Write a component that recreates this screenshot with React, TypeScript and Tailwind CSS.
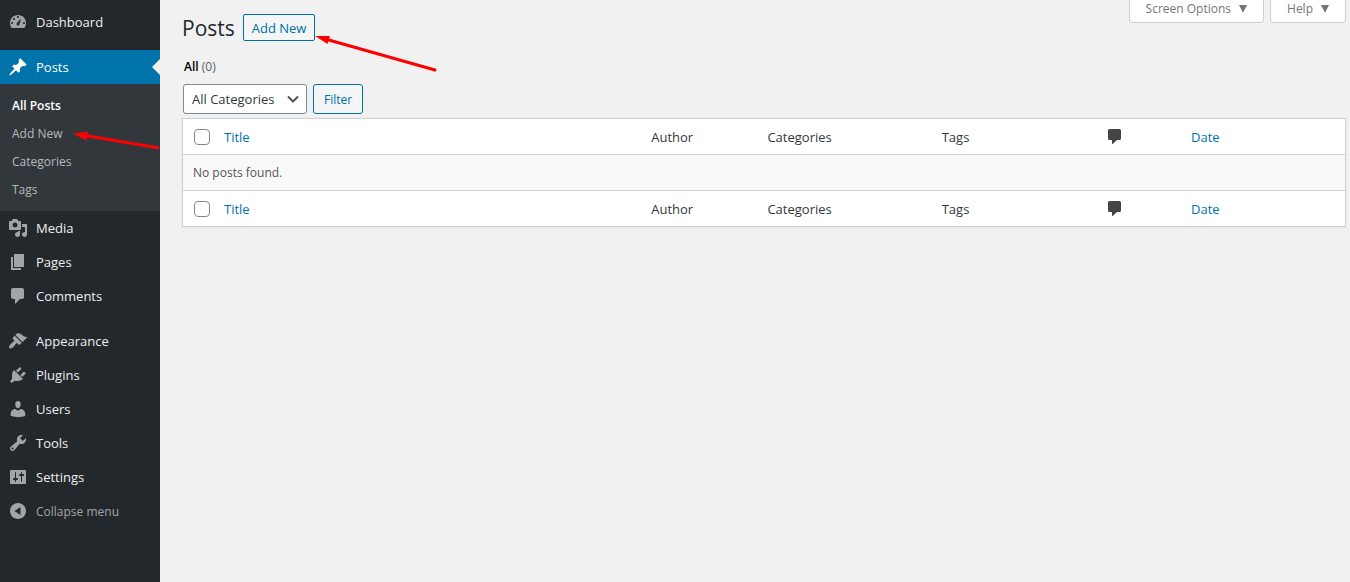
import React from 'react';

const icons = {
  dashboard:
    'M3.76 16h12.48c1.1-1.37 1.76-3.11 1.76-5 0-4.42-3.58-8-8-8s-8 3.58-8 8c0 1.89.66 3.63 1.76 5zM9 5c0-.55.45-1 1-1s1 .45 1 1c0 .56-.45 1-1 1s-1-.44-1-1zM5 7c0-.55.45-1 1-1s1 .45 1 1-.45 1-1 1-1-.45-1-1zM8.520 11.400c.84-.83 4.500-5 4.500-5s-.650 4.180-1.480 5.010c-.84.84-2.180.84-3.020 0zM3 11c0-.55.45-1 1-1s1 .45 1 1c0 .56-.45 1-1 1s-1-.44-1-1zM15 11c0-.55.45-1 1-1s1 .45 1 1c0 .56-.45 1-1 1s-1-.44-1-1zM8.500 12a1.500 1.500 0 1 0 3 0z',
  posts:
    'M10.44 3.02l1.820-1.820 6.360 6.350-1.830 1.820c-1.050-.68-2.480-.57-3.410.36l-.75.75c-.92.93-1.040 2.350-.35 3.410l-1.830 1.820-2.410-2.410-2.800 2.790c-.42.42-3.380 2.710-3.800 2.290s1.860-3.390 2.280-3.810l2.790-2.790L4.100 9.360l1.830-1.820c1.050.69 2.480.57 3.400-.36l.75-.75c.93-.92 1.050-2.350.36-3.410z',
  media:
    'M13 11V4c0-.55-.45-1-1-1h-1.670L9 1H5L3.670 3H2c-.55 0-1 .45-1 1v7c0 .55.45 1 1 1h10c.55 0 1-.45 1-1zM7 4.500c1.380 0 2.500 1.120 2.500 2.500S8.380 9.500 7 9.500 4.500 8.380 4.500 7 5.620 4.500 7 4.500zM14 6h5v10.500c0 1.380-1.120 2.500-2.500 2.500S14 17.880 14 16.500s1.120-2.500 2.500-2.500c.17 0 .34.02.5.05V9h-3V6zM10 14.050V13h2v3.500c0 1.380-1.120 2.500-2.500 2.500S7 17.880 7 16.500 8.120 14 9.500 14c.17 0 .34.02.5.05z',
  pages: 'M6 15V2h10v13H6zM5 16h8v2H3V5h2v11z',
  comments:
    'M5 2h9c1.100 0 2 .9 2 2v7c0 1.100-.9 2-2 2h-2l-5 5v-5H5c-1.100 0-2-.9-2-2V4c0-1.100.9-2 2-2z',
  appearance:
    'M14.480 11.060L7.410 3.990l1.500-1.500c.5-.56 2.300-.47 3.510.32 1.210.8 1.430 1.280 2.910 2.100 1.180.64 2.450 1.260 4.450.85zM13.770 11.770L6.700 4.700 4.930 6.470c-.39.39-.39 1.020 0 1.410l1.060 1.060c.39.39.39 1.030 0 1.420-.6.6-1.430 1.110-2.210 1.690-.35.26-.7.53-1.010.84C1.430 14.230.4 16.080 1.400 17.070c.99 1 2.840-.03 4.180-1.360.31-.31.58-.66.85-1.020.57-.78 1.080-1.610 1.690-2.210.39-.39 1.020-.39 1.410 0l1.060 1.060c.39.39 1.020.39 1.410 0z',
  plugins:
    'M13.110 4.360L9.870 7.600 8 5.730l3.240-3.240c.35-.34 1.050-.2 1.560.32.52.51.66 1.210.31 1.550zM5.110 6.130l.91-1.120 9.010 9.010-1.190.84c-.71.71-2.630 1.160-3.820 1.160H6.140L4.900 17.260c-.59.59-1.540.59-2.120 0-.59-.58-.59-1.530 0-2.120l1.240-1.240v-3.880c0-1.130.4-3.190 1.090-3.890zM12.370 10.100l3.240-3.240c.34-.35 1.040-.21 1.550.31.52.51.66 1.210.31 1.550l-3.240 3.250z',
  users:
    'M10 9.250c-2.270 0-2.730-3.440-2.730-3.440C7 4.020 7.820 2 9.970 2c2.160 0 2.980 2.020 2.710 3.810 0 0-.41 3.440-2.680 3.440zM10 11.820L12.720 10c2.390 0 4.520 2.330 4.520 4.530v2.490s-3.650 1.130-7.240 1.130c-3.650 0-7.240-1.130-7.240-1.130v-2.490c0-2.250 1.940-4.480 4.470-4.480z',
  tools:
    'M16.680 9.770c-1.340 1.340-3.300 1.670-4.950.99l-5.410 6.520c-.99.99-2.590.99-3.580 0s-.99-2.590 0-3.570l6.520-5.420c-.68-1.650-.35-3.610.99-4.950 1.280-1.280 3.120-1.620 4.720-1.060l-2.890 2.890 2.820 2.820 2.860-2.870c.53 1.580.18 3.390-1.080 4.650zM3.810 16.210c.4.39 1.040.39 1.430 0 .4-.4.4-1.040 0-1.430-.39-.4-1.030-.4-1.430 0-.39.39-.39 1.030 0 1.430z',
  settings:
    'M18 16V4c0-.55-.45-1-1-1H3c-.55 0-1 .45-1 1v12c0 .55.45 1 1 1h14c.55 0 1-.45 1-1zM8 11h1c.55 0 1 .45 1 1s-.45 1-1 1H8v1.500c0 .28-.22.5-.5.5s-.5-.22-.5-.5V13H6c-.55 0-1-.45-1-1s.45-1 1-1h1V5.500c0-.28.22-.5.5-.5s.5.22.5.5V11zM13 9h-1c-.55 0-1-.45-1-1s.45-1 1-1h1V5.500c0-.28.22-.5.5-.5s.5.22.5.5V7h1c.55 0 1 .45 1 1s-.45 1-1 1h-1v5.500c0 .28-.22.5-.5.5s-.5-.22-.5-.5V9z',
  collapse:
    'M10 2c4.420 0 8 3.580 8 8s-3.580 8-8 8-8-3.580-8-8 3.580-8 8-8zM12.500 14V6L6.500 10z',
};

type IconName = keyof typeof icons;

function Icon({ name, className }: { name: IconName; className: string }) {
  return (
    <svg viewBox="0 0 20 20" className={className} fill="currentColor" fillRule="evenodd" aria-hidden="true">
      <path d={icons[name]} />
    </svg>
  );
}

function MenuItem({ icon, label }: { icon: IconName; label: string }) {
  return (
    <li>
      <a href="#" className="flex h-[34px] items-center gap-2 pl-2 text-[13px] text-[#eeeeee]">
        <Icon name={icon} className="size-5 text-[#a0a5aa]" />
        <span className="pt-[2px]">{label}</span>
      </a>
    </li>
  );
}

function Sidebar() {
  return (
    <nav aria-label="Main menu" className="w-40 shrink-0 bg-[#23282d] pt-[5px]">
      <ul>
        <MenuItem icon="dashboard" label="Dashboard" />
        <li className="mt-[11px]">
          <a
            href="#"
            aria-current="page"
            className="relative flex h-[34px] items-center gap-2 bg-[#0073aa] pl-2 text-[13px] text-white"
          >
            <Icon name="posts" className="size-5" />
            <span className="pt-[2px]">Posts</span>
            <span className="absolute top-1/2 right-0 -mt-2 border-8 border-l-0 border-transparent border-r-[#f1f1f1]" />
          </a>
          <ul className="bg-[#32373c] pt-2 pb-[7px] text-[12px] text-[#b4b9be]">
            <li>
              <a href="#" className="flex h-7 items-center px-3 font-semibold text-white">All Posts</a>
            </li>
            {['Add New', 'Categories', 'Tags'].map((t) => (
              <li key={t}>
                <a href="#" className="flex h-7 items-center px-3">{t}</a>
              </li>
            ))}
          </ul>
        </li>
        <MenuItem icon="media" label="Media" />
        <MenuItem icon="pages" label="Pages" />
        <MenuItem icon="comments" label="Comments" />
        <li className="h-[11px]" aria-hidden="true" />
        <MenuItem icon="appearance" label="Appearance" />
        <MenuItem icon="plugins" label="Plugins" />
        <MenuItem icon="users" label="Users" />
        <MenuItem icon="tools" label="Tools" />
        <MenuItem icon="settings" label="Settings" />
        <li>
          <button type="button" className="flex h-[34px] w-full items-center gap-2 pl-2 text-[12px] text-[#a0a5aa]">
            <Icon name="collapse" className="size-5" />
            <span className="pt-[2px]">Collapse menu</span>
          </button>
        </li>
      </ul>
    </nav>
  );
}

function ScreenTab({ label }: { label: string }) {
  return (
    <button
      type="button"
      className="flex h-[23px] items-center gap-2 rounded-b border border-t-0 border-[#ccd0d4] bg-white px-4 pb-1 text-[12px] leading-4 text-[#72777c]"
    >
      {label}
      <svg viewBox="0 0 8 7" className="mb-[2px] h-[7px] w-2" fill="currentColor" aria-hidden="true">
        <path d="M0 0h8L4.500 7h-1z" />
      </svg>
    </button>
  );
}

function HeadingRow({ id }: { id: string }) {
  return (
    <tr className="h-[35px]">
      <td className="pl-[11px]">
        <input
          id={id}
          type="checkbox"
          aria-label="Select all"
          className="block size-4 appearance-none rounded border border-[#7e8993] bg-white"
        />
      </td>
      <th scope="col" className="px-2 text-left font-normal">
        <a href="#" className="text-[#0073aa]">Title</a>
      </th>
      <th scope="col" className="px-2 text-left font-normal">Author</th>
      <th scope="col" className="px-2 text-left font-normal">Categories</th>
      <th scope="col" className="px-2 text-left font-normal">Tags</th>
      <th scope="col" aria-label="Comments" className="text-left">
        <svg viewBox="0 0 13 15" className="h-[15px] w-[13px]" fill="#444444" aria-hidden="true">
          <path d="M1.500 0h10Q13 0 13 1.500v8Q13 11 11.500 11H9l-5 4.500V11H1.500Q0 11 0 9.500v-8Q0 0 1.500 0z" />
        </svg>
      </th>
      <th scope="col" className="px-2 text-left font-normal">
        <a href="#" className="text-[#0073aa]">Date</a>
      </th>
    </tr>
  );
}

export default function App() {
  return (
    <div className="relative flex min-h-screen bg-[#f1f1f1] font-['Open_Sans',sans-serif] text-[#32373c]">
      <Sidebar />
      <main className="min-w-0 flex-1 pr-1 pl-[22px]">
        <header className="flex items-start justify-between">
          <div className="flex items-start gap-2 pt-[14px]">
            <h1 className="text-[21px] leading-[29px] text-[#23282d]">Posts</h1>
            <a
              href="#"
              className="flex h-[27px] items-center rounded-xs border border-[#0071a1] bg-[#f3f5f6] px-2 pt-[2px] text-[13px] font-medium text-[#0071a1]"
            >
              Add New
            </a>
          </div>
          <div className="flex gap-[6px]">
            <ScreenTab label="Screen Options" />
            <ScreenTab label="Help" />
          </div>
        </header>

        <p className="mt-[14px] pl-[2px] text-[12px] leading-5 text-[#555d66]">
          <a href="#" aria-current="page" className="font-semibold text-black">All</a> (0)
        </p>

        <form className="mt-[7px] flex gap-[6px] pl-px" onSubmit={(e) => e.preventDefault()}>
          <div className="relative">
            <select
              aria-label="Filter by category"
              className="h-[30px] w-[124px] appearance-none rounded-[3px] border border-[#7e8993] bg-white pt-[2px] pr-6 pl-2 text-[13px] text-[#32373c]"
            >
              <option>All Categories</option>
            </select>
            <svg
              viewBox="0 0 12 8"
              className="pointer-events-none absolute top-[11px] right-2 h-2 w-3"
              fill="none"
              stroke="#555555"
              strokeWidth="2"
              aria-hidden="true"
            >
              <path d="M1 1.500l5 5 5-5" />
            </svg>
          </div>
          <button
            type="submit"
            className="h-[30px] rounded-[3px] border border-[#0071a1] bg-[#f3f5f6] px-[10px] pt-[2px] text-[12px] text-[#0071a1]"
          >
            Filter
          </button>
        </form>

        <div className="mt-1 border border-[#ccd0d4] bg-white shadow-xs">
          <table className="w-full table-fixed border-separate border-spacing-0 text-[13px] leading-5">
            <colgroup>
              <col className="w-[33px]" />
              <col />
              <col className="w-[10%]" />
              <col className="w-[15%]" />
              <col className="w-[15%]" />
              <col className="w-[75px]" />
              <col className="w-[162px]" />
            </colgroup>
            <thead>
              <HeadingRow id="select-all-top" />
            </thead>
            <tbody>
              <tr className="h-[37px]">
                <td
                  colSpan={7}
                  className="border-y border-[#ccd0d4] bg-[#f9f9f9] px-[10px] text-[12px] text-[#555555]"
                >
                  No posts found.
                </td>
              </tr>
            </tbody>
            <tfoot>
              <HeadingRow id="select-all-bottom" />
            </tfoot>
          </table>
        </div>
      </main>

      <svg
        viewBox="0 0 122 36"
        className="pointer-events-none absolute top-9 left-[315px] h-9 w-[122px]"
        fill="#ff0000"
        stroke="#ff0000"
        aria-hidden="true"
      >
        <path d="M12 3.500L120 34" strokeWidth="3" strokeLinecap="round" />
        <path d="M0 0L15-.5 12.500 8z" stroke="none" />
      </svg>
      <svg
        viewBox="0 0 87 20"
        className="pointer-events-none absolute top-[130px] left-[73px] h-5 w-[87px]"
        fill="#ff0000"
        stroke="#ff0000"
        aria-hidden="true"
      >
        <path d="M12 5.500L86 18" strokeWidth="3" />
        <path d="M0 3.500L15 1.500 13.500 10.500z" stroke="none" />
      </svg>
    </div>
  );
}
